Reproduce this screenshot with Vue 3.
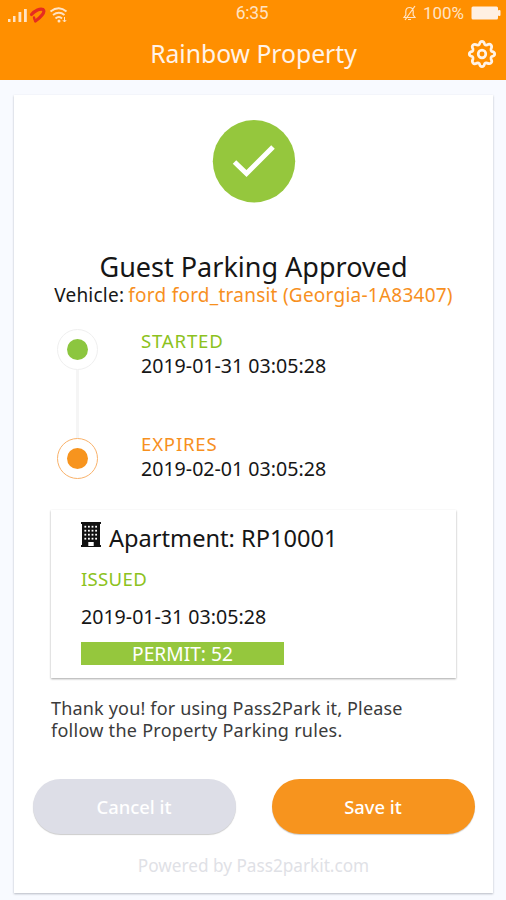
<script setup>
const events = [
  { name: 'STARTED', time: '2019-01-31 03:05:28', kind: 'start' },
  { name: 'EXPIRES', time: '2019-02-01 03:05:28', kind: 'end' },
]
const windowRows = [4.5, 8.5, 12.5, 16.5]
const windowCols = [4, 7.6, 11.2, 14.8]
</script>

<template>
  <div class="screen">
    <header class="header">
      <div class="status">
        <div class="signals">
          <svg width="62" height="22" viewBox="0 0 62 22">
            <g fill="#ffe3c4">
              <rect x="0" y="17" width="2.5" height="3" /><rect x="5" y="14" width="2.5" height="6" />
              <rect x="10.5" y="10" width="2.8" height="10" /><rect x="16" y="7" width="2.8" height="13" />
            </g>
            <path d="M23.5 12.5C27 8.5 32 6.2 35 7.5C38 10 32 16 27.5 19" fill="none" stroke="#e52c20" stroke-width="3.2" stroke-linecap="round" />
            <path d="M26.5 17.5L26 15.5" stroke="#e52c20" stroke-width="2.4" stroke-linecap="round" />
            <g fill="none" stroke="#ffe3c4" stroke-width="1.9">
              <path d="M42.5 9.5Q51 3 58.5 9.5M45 13Q51 8.5 56.5 13M47.5 16.5Q51 13.5 54 16.5" />
            </g>
            <circle cx="51" cy="19" r="1.5" fill="#ffe3c4" />
            <path d="M56.5 15v5M54.8 18l1.7 2 1.7-2" stroke="#ffe3c4" fill="none" />
          </svg>
        </div>
        <span class="clock">6:35</span>
        <div class="power">
          <svg class="bell" width="15" height="16" viewBox="0 0 15 16" fill="none" stroke="#ffe3c4" stroke-width="1.2">
            <path d="M2 12.5H13L11.2 10V6Q10.8 2.5 7.5 2.5T3.8 6V10ZM6 14.5h3M3 15L13 1" />
          </svg>
          <span class="percent">100%</span>
          <svg width="30" height="14" viewBox="0 0 30 14"><rect x=".5" y=".5" width="26.5" height="13" rx="1.5" fill="#fff0e3" /><rect x="27" y="4" width="2.5" height="6" rx="1" fill="#fff0e3" /></svg>
        </div>
      </div>
      <div class="titlebar">
        <i></i>
        <h1 class="title">Rainbow Property</h1>
        <svg class="gear" width="30" height="30" viewBox="0 0 30 30" fill="none" stroke="#fff3e8" stroke-width="2.7" stroke-linejoin="round">
          <path d="M12.4 5.3Q13 2.3 15 2.3T17.6 5.3Q18.5 6.3 20 6Q22.6 4.4 24 6T24 10Q23.7 11.5 24.7 12.4Q27.7 13 27.7 15T24.7 17.6Q23.7 18.5 24 20Q25.6 22.6 24 24T20 24Q18.5 23.7 17.6 24.7Q17 27.7 15 27.7T12.4 24.7Q11.5 23.7 10 24Q7.4 25.6 6 24T6 20Q6.3 18.5 5.3 17.6Q2.3 17 2.3 15T5.3 12.4Q6.3 11.5 6 10Q4.4 7.4 6 6T10 6Q11.5 6.3 12.4 5.3Z" />
          <circle cx="15" cy="15" r="3.8" />
        </svg>
      </div>
    </header>

    <main class="card">
      <svg class="check" width="84" height="84" viewBox="0 0 84 84">
        <circle cx="42" cy="42.3" r="41.2" fill="#95c73d" />
        <path d="M22.5 43L34.5 54.5L61 28" fill="none" stroke="#fff" stroke-width="5" />
      </svg>
      <h2 class="heading">Guest Parking Approved</h2>
      <p class="vehicle"><span class="label">Vehicle:</span><span class="car">ford ford_transit (Georgia-1A83407)</span></p>

      <section class="timeline">
        <div v-for="e in events" :key="e.name" class="event" :class="e.kind">
          <div class="rail">
            <div class="ring"><i class="dot"></i></div>
            <i v-if="e.kind === 'start'" class="line"></i>
          </div>
          <div class="info">
            <p class="tag">{{ e.name }}</p>
            <p class="date">{{ e.time }}</p>
          </div>
        </div>
      </section>

      <section class="permit">
        <div class="apartment">
          <svg width="20" height="25" viewBox="0 0 20 25">
            <path d="M0 0H20V2H19V23H20V25H0V23H1V2H0Z" fill="#111" />
            <template v-for="y in windowRows" :key="y">
              <rect v-for="x in windowCols" :key="x" :x="x - .6" :y="y - .7" width="1.8" height="1.8" fill="#fff" />
            </template>
            <rect x="7.3" y="20" width="5.4" height="4" fill="#fff" />
          </svg>
          <span class="unit">Apartment: RP10001</span>
        </div>
        <p class="tag issued">ISSUED</p>
        <p class="date">2019-01-31 03:05:28</p>
        <div class="badge">PERMIT: 52</div>
      </section>

      <p class="thanks"><span class="first">Thank you! for using Pass2Park it, Please</span><br /><span class="second">follow the Property Parking rules.</span></p>

      <div class="actions">
        <button class="btn cancel">Cancel it</button>
        <button class="btn save">Save it</button>
      </div>
      <p class="powered">Powered by Pass2parkit.com</p>
    </main>
  </div>
</template>

<style>
body { background: #f8faff; }
</style>

<style scoped>
* { box-sizing: border-box; }
h1, h2, p { margin: 0; font-weight: 400; white-space: nowrap; }
.screen { width: 506px; height: 900px; overflow: hidden; font-family: "Noto Sans", sans-serif; color: #161616; background: #f8faff; }
.header { height: 80px; background: #ff8f00; }
.status { height: 28px; display: grid; grid-template-columns: 1fr auto 1fr; align-items: center; padding: 0 5px 2px 8px; font-family: Roboto, sans-serif; color: #ffe3c4; }
.signals { display: flex; }
.clock { font-size: 17.5px; letter-spacing: -.3px; margin-right: 5px; }
.power { display: flex; justify-content: flex-end; align-items: center; }
.percent { font-size: 17px; margin: 0 7px 0 6px; }
.titlebar { height: 52px; display: grid; grid-template-columns: 28px 1fr 30px; padding: 0 9px 2px 12px; align-items: center; }
.title { font-size: 24.7px; line-height: 50px; padding-top: 1px; text-align: center; color: #fff3e8; }
.card { width: 479px; height: 798px; margin: 15px 0 0 14px; padding-top: 24px; background: #fff; box-shadow: 0 1px 2px rgba(60, 65, 80, .35); display: flex; flex-direction: column; align-items: center; }
.check { display: block; flex: none; }
.heading { margin-top: 49px; font-size: 27px; line-height: 30px; }
.vehicle { height: 26px; font-size: 19px; line-height: 26px; letter-spacing: .24px; display: flex; gap: 4px; }
.car { color: #f7901e; }
.timeline { width: 100%; padding-left: 42px; margin-top: 21px; }
.event { display: flex; gap: 43px; height: 109px; }
.end { height: 41px; }
.rail { width: 42px; display: flex; flex-direction: column; align-items: center; }
.ring { width: 41px; height: 41px; flex: none; border: 1.5px solid #efefef; border-radius: 50%; display: grid; place-items: center; }
.end .ring { border-color: #f9b26b; }
.dot { width: 21px; height: 21px; border-radius: 50%; background: #8cc63f; }
.end .dot { background: #f7941e; }
.line { width: 3px; flex: 1; background: #f5f5f5; }
.tag { font-size: 18.6px; line-height: 24px; letter-spacing: .8px; color: #8cc220; }
.end .tag { color: #f7901e; }
.end .info { margin-top: -6px; }
.date { font-size: 19.6px; line-height: 26px; }
.permit { width: 405px; height: 168px; margin: 31px 0 0; padding: 12px 0 0 30px; background: #fff; box-shadow: 0 1px 2px rgba(0, 0, 0, .35); }
.apartment { display: flex; gap: 8px; height: 34px; align-items: flex-start; }
.unit { font-size: 23.6px; line-height: 32px; }
.issued { margin-top: 11px; letter-spacing: .3px; }
.permit .date { margin-top: 13px; }
.badge { width: 203px; height: 23px; margin-top: 12px; background: #95c73d; color: #fff; font-size: 19.2px; line-height: 24px; text-align: center; }
.thanks { align-self: flex-start; margin: 19px 0 0 37px; font-size: 18px; line-height: 22px; letter-spacing: .18px; color: #3b3b3b; }
.second { letter-spacing: .27px; }
.actions { display: flex; gap: 36px; margin-top: 38px; }
.btn { width: 203px; height: 55px; padding: 0; border: 0; border-radius: 28px; font: 500 18.4px/55px "Noto Sans", sans-serif; color: #fff; box-shadow: 0 1px 1px rgba(0, 0, 0, .2); }
.cancel { background: #dddee7; }
.save { background: #f7941e; }
.powered { margin-top: 20px; font-size: 17.2px; line-height: 24px; color: #dfe1e6; }
</style>
